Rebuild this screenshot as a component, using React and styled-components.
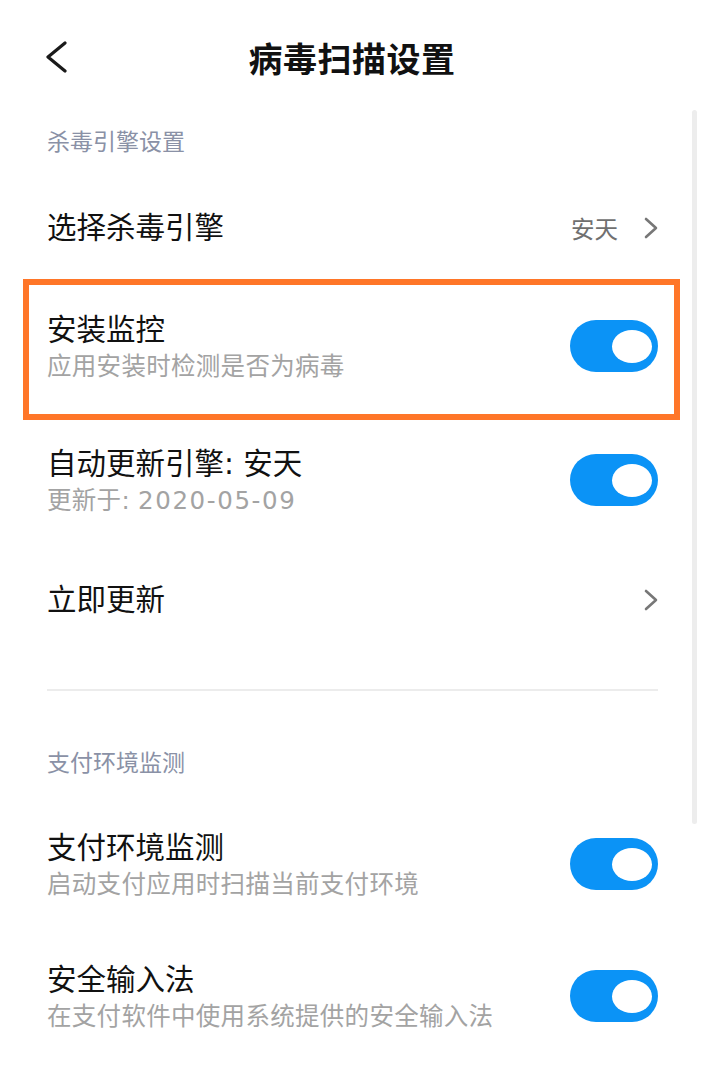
import React from 'react'
import styled, { createGlobalStyle } from 'styled-components'

const GlobalStyle = createGlobalStyle`
  html, body {
    margin: 0;
    padding: 0;
    background: #ffffff;
  }
  body {
    font-family: 'Noto Sans CJK SC', 'Noto Sans', sans-serif;
    color: #111111;
  }
`

const Page = styled.div`
  position: relative;
  width: 704px;
  height: 1080px;
  overflow: hidden;
  background: #ffffff;
`

const Header = styled.div`
  position: relative;
  height: 120px;
  padding-bottom: 4px;
  box-sizing: border-box;
  display: flex;
  align-items: center;
  justify-content: center;
`

const Back = styled.div`
  position: absolute;
  left: 46px;
  top: 40px;
  width: 24px;
  height: 34px;
  display: flex;
  align-items: center;
`

const Title = styled.div`
  font-size: 34px;
  font-weight: 700;
  line-height: 40px;
  letter-spacing: 0.5px;
  color: #111111;
`

const SectionTitle = styled.div`
  padding: ${p => p.$top}px 47px 0;
  height: ${p => p.$height}px;
  box-sizing: border-box;
  font-size: 23px;
  line-height: 30px;
  color: #8a91a6;
`

const Row = styled.div`
  position: relative;
  height: ${p => p.$height}px;
  padding: 0 46px 0 47px;
  box-sizing: border-box;
  display: flex;
  align-items: center;
  justify-content: space-between;
`

const Texts = styled.div`
  display: flex;
  flex-direction: column;
`

const RowTitle = styled.div`
  font-family: 'DejaVu Sans', 'Noto Sans CJK SC', sans-serif;
  font-size: 29.5px;
  line-height: 38px;
  color: #111111;
`

const RowSub = styled.div`
  font-family: 'DejaVu Sans', 'Noto Sans CJK SC', sans-serif;
  font-size: 24.5px;
  line-height: 36px;
  letter-spacing: 0.3px;
  color: #a3a3a3;
`

const Digits = styled.span`
  letter-spacing: 1.6px;
`

const Right = styled.div`
  display: flex;
  align-items: center;
  gap: 26px;
`

const Value = styled.div`
  font-size: 23.5px;
  line-height: 30px;
  color: #707070;
`

const Switch = styled.div`
  width: 88px;
  height: 52px;
  border-radius: 26px;
  background: #0b93f6;
  display: flex;
  align-items: center;
  justify-content: flex-end;
  padding-right: 6px;
  box-sizing: border-box;
  margin-top: ${p => p.$shift || 0}px;
`

const Knob = styled.div`
  width: 40px;
  height: 33px;
  border-radius: 50%;
  background: #ffffff;
`

const Highlight = styled.div`
  position: absolute;
  left: 23px;
  right: 24px;
  top: -1px;
  bottom: -4px;
  border: 6px solid #ff7628;
  pointer-events: none;
`

const Divider = styled.div`
  margin: 37px 46px 0 47px;
  height: 2px;
  background: #ececec;
`

const ScrollBar = styled.div`
  position: absolute;
  right: 7px;
  top: 110px;
  width: 5px;
  height: 714px;
  border-radius: 3px;
  background: #ededed;
`

const Chevron = ({ dir = 'right', color, size = 14, h = 22, stroke = 2.6 }) => (
  <svg width={size} height={h} viewBox={`0 0 ${size} ${h}`} fill="none">
    <path
      d={dir === 'right'
        ? `M2 2 L${size - 2} ${h / 2} L2 ${h - 2}`
        : `M${size - 2} 2 L2 ${h / 2} L${size - 2} ${h - 2}`}
      stroke={color}
      strokeWidth={stroke}
      strokeLinecap="round"
      strokeLinejoin="round"
    />
  </svg>
)

const Toggle = () => (
  <Switch $shift={-4}>
    <Knob />
  </Switch>
)

const App = () => {
  return (
    <Page>
      <GlobalStyle />
      <Header>
        <Back>
          <Chevron dir="left" color="#1a1a1a" size={21} h={32} stroke={3.2} />
        </Back>
        <Title>病毒扫描设置</Title>
      </Header>

      <SectionTitle $top={5} $height={56}>杀毒引擎设置</SectionTitle>

      <Row $height={104}>
        <RowTitle>选择杀毒引擎</RowTitle>
        <Right>
          <Value>安天</Value>
          <Chevron color="#777777" />
        </Right>
      </Row>

      <Row $height={136}>
        <Texts>
          <RowTitle>安装监控</RowTitle>
          <RowSub>应用安装时检测是否为病毒</RowSub>
        </Texts>
        <Toggle />
        <Highlight />
      </Row>

      <Row $height={132}>
        <Texts>
          <RowTitle>自动更新引擎: 安天</RowTitle>
          <RowSub>更新于: <Digits>2020-05-09</Digits></RowSub>
        </Texts>
        <Toggle />
      </Row>

      <Row $height={104}>
        <RowTitle>立即更新</RowTitle>
        <Chevron color="#777777" />
      </Row>

      <Divider />

      <SectionTitle $top={55} $height={109}>支付环境监测</SectionTitle>

      <Row $height={132}>
        <Texts>
          <RowTitle>支付环境监测</RowTitle>
          <RowSub>启动支付应用时扫描当前支付环境</RowSub>
        </Texts>
        <Toggle />
      </Row>

      <Row $height={132}>
        <Texts>
          <RowTitle>安全输入法</RowTitle>
          <RowSub>在支付软件中使用系统提供的安全输入法</RowSub>
        </Texts>
        <Toggle />
      </Row>

      <ScrollBar />
    </Page>
  )
}

export default App
